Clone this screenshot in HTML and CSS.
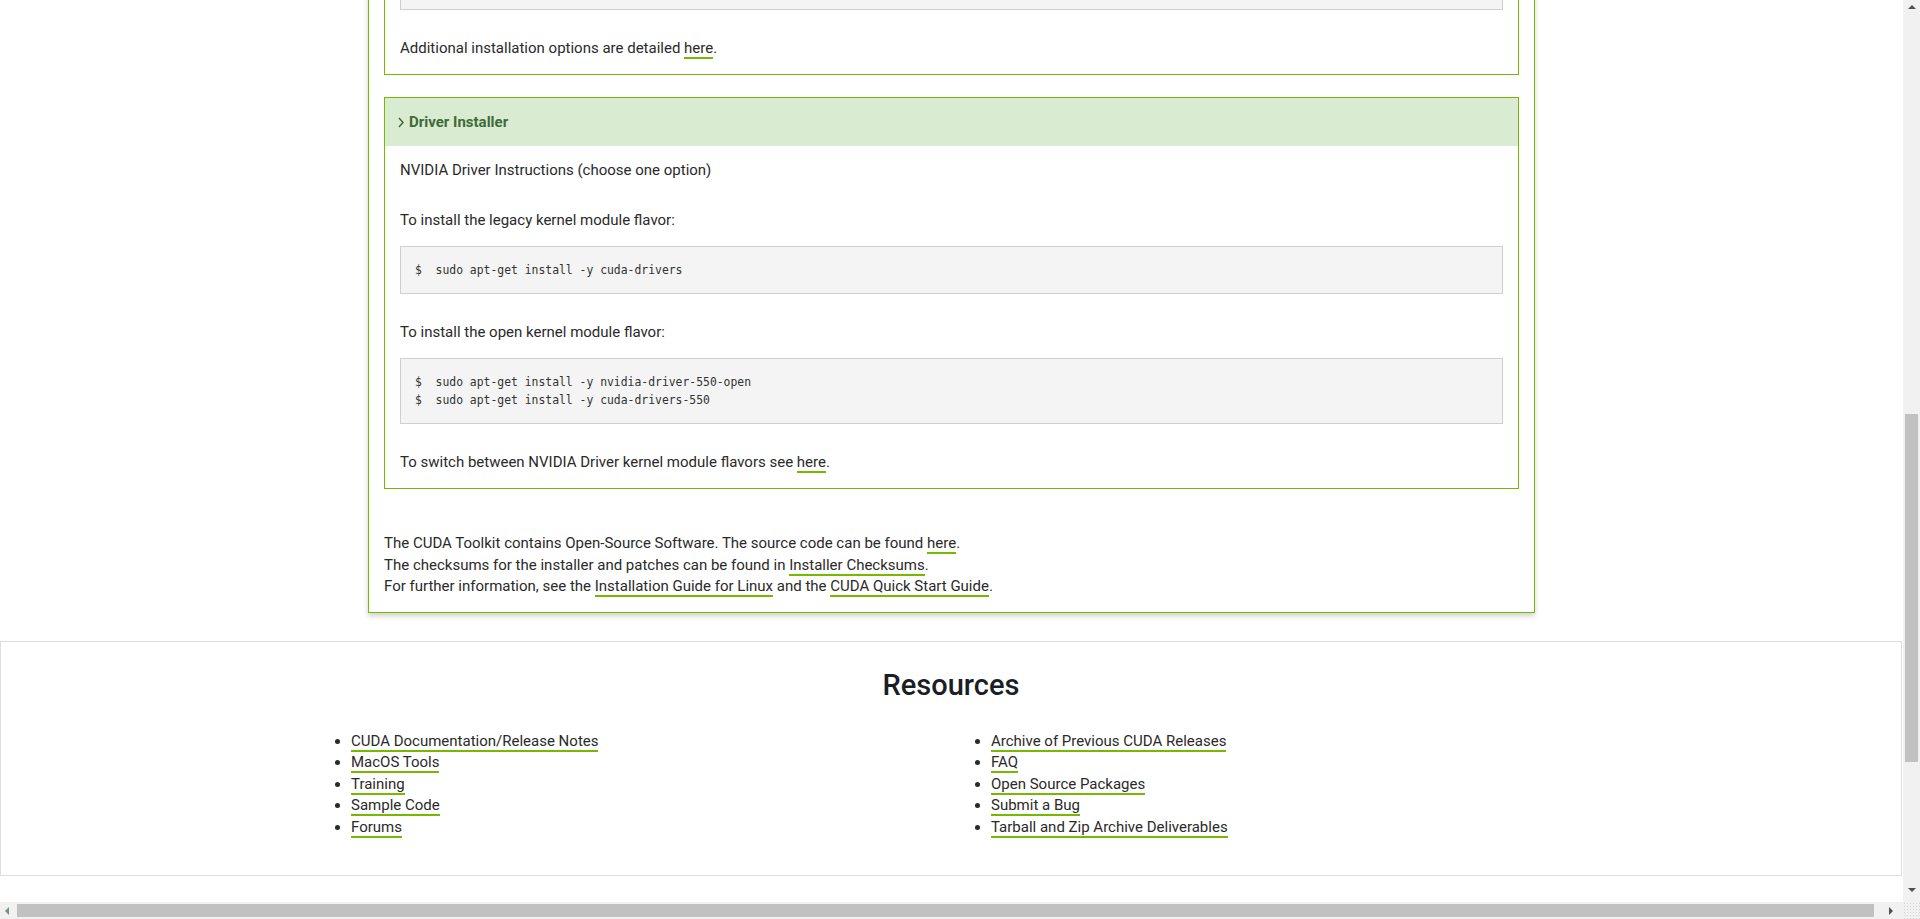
FILE: index.html
```html
<!DOCTYPE html>
<html lang="en">
<head>
<meta charset="utf-8">
<title>CUDA Toolkit Downloads</title>
<link rel="stylesheet" href="styles.css">
</head>
<body>
<div class="page">
  <div class="card">
    <div class="acc">
      <div class="acc-body">
        <pre class="code code-top"></pre>
        <p class="after-code">Additional installation options are detailed <a href="#">here</a>.</p>
      </div>
    </div>

    <div class="acc acc-driver">
      <div class="acc-head">
        <svg class="chev" width="6" height="11" viewBox="0 0 6 11"><polyline points="1,1 5,5.5 1,10" fill="none" stroke="currentColor" stroke-width="1.5"/></svg>
        <span>Driver Installer</span>
      </div>
      <div class="acc-body">
        <p class="lead">NVIDIA Driver Instructions (choose one option)</p>
        <p>To install the legacy kernel module flavor:</p>
        <pre class="code">$  sudo apt-get install -y cuda-drivers</pre>
        <p class="after-code">To install the open kernel module flavor:</p>
        <pre class="code">$  sudo apt-get install -y nvidia-driver-550-open
$  sudo apt-get install -y cuda-drivers-550</pre>
        <p class="after-code">To switch between NVIDIA Driver kernel module flavors see <a href="#">here</a>.</p>
      </div>
    </div>

    <div class="notes">
      <p>The CUDA Toolkit contains Open-Source Software. The source code can be found <a href="#">here</a>.<br>
      The checksums for the installer and patches can be found in <a href="#">Installer Checksums</a>.<br>
      For further information, see the <a href="#">Installation Guide for Linux</a> and the <a href="#">CUDA Quick Start Guide</a>.</p>
    </div>
  </div>

  <section class="resources">
    <h2>Resources</h2>
    <div class="res-grid">
      <ul>
        <li><a href="#">CUDA Documentation/Release Notes</a></li>
        <li><a href="#">MacOS Tools</a></li>
        <li><a href="#">Training</a></li>
        <li><a href="#">Sample Code</a></li>
        <li><a href="#">Forums</a></li>
      </ul>
      <ul>
        <li><a href="#">Archive of Previous CUDA Releases</a></li>
        <li><a href="#">FAQ</a></li>
        <li><a href="#">Open Source Packages</a></li>
        <li><a href="#">Submit a Bug</a></li>
        <li><a href="#">Tarball and Zip Archive Deliverables</a></li>
      </ul>
    </div>
  </section>
</div>

<div class="vbar">
  <span class="arr arr-up"></span>
  <span class="vthumb"></span>
  <span class="arr arr-down"></span>
</div>
<div class="hbar">
  <span class="arr arr-left"></span>
  <span class="hthumb"></span>
  <span class="arr arr-right"></span>
</div>
<div class="corner"></div>
</body>
</html>
```

FILE: styles.css
```css
html, body {
  margin: 0;
  padding: 0;
  background: #fff;
  overflow: hidden;
}

body {
  font-family: Roboto, "Liberation Sans", Arial, sans-serif;
  font-size: 15px;
  line-height: 22px;
  color: #2a2a2a;
  width: 1920px;
  height: 919px;
}

.page {
  width: 1903px;
  margin-top: -83px;
}

a {
  color: inherit;
  text-decoration: none;
  border-bottom: 2px solid #76b900;
}

p {
  margin: 0;
}

.card {
  width: 1135px;
  margin: 0 auto;
  border: 1px solid #76b900;
  padding: 15px 15px 14px;
  box-shadow: 0 3px 5px rgba(0, 0, 0, 0.18);
  background: #fff;
}

.acc {
  border: 1px solid #76b900;
}

.acc-driver {
  margin-top: 22px;
}

.acc-head {
  height: 48px;
  background: #d9ebd1;
  display: flex;
  align-items: center;
  gap: 5px;
  padding-left: 13px;
  font-weight: 700;
  color: #3f6a39;
}

.chev {
  display: block;
}

.acc-body {
  padding: 13px 15px 15px;
}

.lead {
  margin-bottom: 28px;
}

.code {
  margin: 15px 0 0;
  padding: 14px;
  border: 1px solid #cfcfcf;
  background-color: #f4f5f4;
  background-image: repeating-conic-gradient(#f1f2f1 0 25%, #f5f6f5 0 50%);
  background-size: 2px 2px;
  font-family: "DejaVu Sans Mono", "Liberation Mono", monospace;
  font-size: 11.4px;
  line-height: 18px;
  color: #333;
  white-space: pre;
}

.code-top {
  height: 18px;
}

.after-code {
  margin-top: 27px;
}

.notes {
  margin-top: 44px;
  line-height: 21.5px;
}

.resources {
  margin-top: 28px;
  width: 1900px;
  border: 1px solid #dedede;
  padding: 26px 0 37px;
  background: #fff;
}

.resources h2 {
  margin: 0 0 29px;
  text-align: center;
  font-size: 29px;
  line-height: 34px;
  font-weight: 500;
  color: #1b1e26;
}

.res-grid {
  width: 1280px;
  margin: 0 auto;
  display: grid;
  grid-template-columns: 640px 640px;
}

.res-grid ul {
  margin: 0;
  padding-left: 40px;
  line-height: 21.5px;
}

/* fake browser scrollbars */
.vbar {
  position: fixed;
  top: 0;
  right: 0;
  width: 17px;
  height: 902px;
  background: #f1f1f1;
}

.vthumb {
  position: absolute;
  left: 2px;
  top: 414px;
  width: 13px;
  height: 348px;
  background: #c1c1c1;
}

.hbar {
  position: fixed;
  left: 0;
  bottom: 0;
  width: 1903px;
  height: 17px;
  background: #f1f1f1;
}

.hthumb {
  position: absolute;
  top: 2px;
  left: 17px;
  width: 1857px;
  height: 13px;
  background: #c1c1c1;
}

.corner {
  position: fixed;
  right: 0;
  bottom: 0;
  width: 17px;
  height: 17px;
  background-color: #f1f1f1;
  background-image: radial-gradient(#d4d4d4 0.7px, transparent 0.8px);
  background-size: 3px 3px;
}

.arr {
  position: absolute;
  width: 0;
  height: 0;
}

.arr-up {
  left: 5px;
  top: 5px;
  border-left: 4px solid transparent;
  border-right: 4px solid transparent;
  border-bottom: 4px solid #505050;
}

.arr-down {
  left: 5px;
  top: 888px;
  border-left: 4px solid transparent;
  border-right: 4px solid transparent;
  border-top: 4px solid #505050;
}

.arr-left {
  left: 5px;
  top: 5px;
  border-top: 4px solid transparent;
  border-bottom: 4px solid transparent;
  border-right: 4px solid #7a8f7a;
}

.arr-right {
  left: 1889px;
  top: 5px;
  border-top: 4px solid transparent;
  border-bottom: 4px solid transparent;
  border-left: 4px solid #505050;
}
```
